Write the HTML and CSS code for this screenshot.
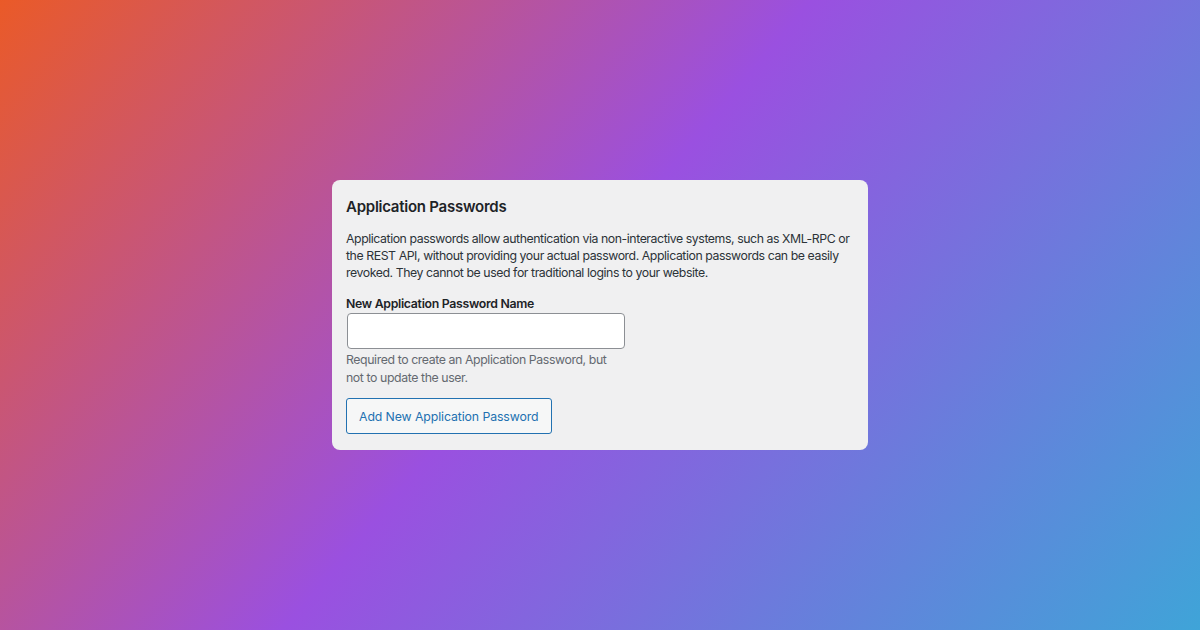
FILE: index.html
```html
<!DOCTYPE html>
<html>
<head>
    <meta charset="utf-8" />
    <title>Application Passwords</title>
    <link rel="stylesheet" href="styles.css">
</head>
<body>
    <div id="page">
        <div class="card">
            <h2 class="card-title">Application Passwords</h2>
            <p class="card-text">Application passwords allow authentication via non-interactive systems, such as XML-RPC or the REST API, without providing your actual password. Application passwords can be easily revoked. They cannot be used for traditional logins to your website.</p>
            <label class="field-label" for="app-name">New Application Password Name</label>
            <input class="field-input" id="app-name" type="text" />
            <p class="field-help">Required to create an Application Password, but not to update the user.</p>
            <button class="btn">Add New Application Password</button>
        </div>
    </div>
</body>
</html>
```

FILE: styles.css
```css
body {
    margin: 0;
    padding: 0;
    font-family: Inter, "Liberation Sans", sans-serif;
}
#page {
    width: 1200px;
    height: 630px;
    display: flex;
    align-items: center;
    justify-content: center;
    background: linear-gradient(130deg, #ea5a28 0%, #9a50e0 47%, #3fa4d8 100%);
}
.card {
    width: 508px;
    height: 242px;
    padding: 14px;
    background-color: #f0f0f1;
    border-radius: 8px;
    display: flex;
    flex-direction: column;
    align-items: flex-start;
    color: #1d2327;
}
.card-title {
    margin: 1px 0 0 0;
    font-size: 15px;
    font-weight: 600;
    letter-spacing: -0.25px;
    line-height: 24px;
}
.card-text {
    margin: 11px -6px 0 0;
    font-size: 12.3px;
    letter-spacing: -0.43px;
    line-height: 17px;
    color: #2c3338;
}
.field-label {
    margin-top: 14px;
    font-size: 12.3px;
    font-weight: 600;
    letter-spacing: -0.3px;
    line-height: 18px;
}
.field-input {
    box-sizing: border-box;
    width: 278px;
    height: 36px;
    margin: 0 0 0 1px;
    border: 1px solid #8c8f94;
    border-radius: 4px;
    background: #fff;
}
.field-help {
    margin: 2px 0 0 0;
    width: 270px;
    font-size: 12.3px;
    letter-spacing: -0.4px;
    line-height: 18px;
    color: #646970;
}
.btn {
    margin-top: 11px;
    height: 36px;
    padding: 0 12px;
    border: 1px solid #2271b1;
    border-radius: 3px;
    background: #f6f7f7;
    color: #2271b1;
    font-family: inherit;
    font-size: 12.3px;
    letter-spacing: -0.1px;
}
```
